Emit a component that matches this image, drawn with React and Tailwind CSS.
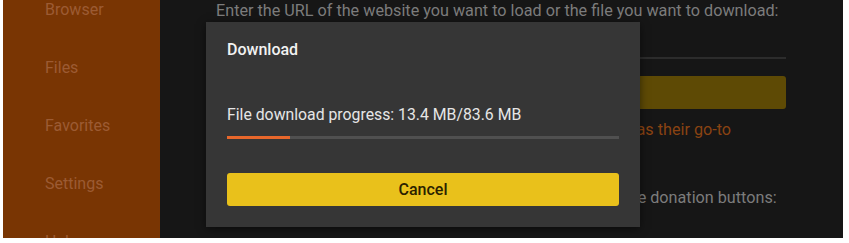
import React from "react";

const menu = ["Browser", "Files", "Favorites", "Settings", "Help"];

export default function App() {
  return (
    <div className="w-[849px] h-[243px] bg-white pl-[3px] pr-[6px] pb-[5px] overflow-hidden font-['Roboto',sans-serif]">
      <div className="relative flex h-full bg-[#161616] overflow-hidden">
        <div className="w-[157px] shrink-0 bg-[#793503] flex flex-col mt-[-19px]">
          {menu.map((m) => (
            <div key={m} className="h-[58px] shrink-0 flex items-center pl-[42px] text-[16px] text-[#9c5b33]">
              {m}
            </div>
          ))}
        </div>

        <div className="flex-1 pl-[56px] pr-[57px]">
          <p className="text-[16.2px] leading-[19px] text-[#7c7c7c] mt-[1px] whitespace-nowrap">
            Enter the URL of the website you want to load or the file you want to download:
          </p>
          <div className="mt-[37px] h-[2px] bg-[#2c2c2c]" />
          <div className="mt-[17px] h-[33px] rounded-[3px] bg-[#5e4a05]" />
          <p className="mt-[11px] text-[16.2px] leading-[19px] text-[#8a4312] whitespace-nowrap">
            Downloader is used by millions of Amazon Fire TV owners as their go-to
          </p>
          <p className="mt-[49px] text-[16.2px] leading-[19px] text-[#7c7c7c] whitespace-nowrap">
            If you enjoy this app, please consider using any one of these donation buttons:
          </p>
        </div>

        <div className="absolute left-[203px] top-[22px] w-[434px] h-[205px] bg-[#363636] shadow-[0_2px_8px_rgba(0,0,0,0.5)] px-[21px] pt-[18px]">
          <h2 className="text-[16px] leading-[20px] font-medium text-[#f2f2f2]">Download</h2>
          <p className="mt-[45px] text-[15.8px] leading-[20px] text-[#e6e6e6]">
            File download progress: 13.4 MB/83.6 MB
          </p>
          <div className="mt-[11px] h-[3px] bg-[#505050]">
            <div className="h-full bg-[#e8672b]" style={{ width: `${(13.4 / 83.6) * 100}%` }} />
          </div>
          <button className="mt-[34px] w-full h-[33px] rounded-[3px] bg-[#e9c11b] text-[16px] font-medium text-[#2b2100]">
            Cancel
          </button>
        </div>
      </div>
    </div>
  );
}
